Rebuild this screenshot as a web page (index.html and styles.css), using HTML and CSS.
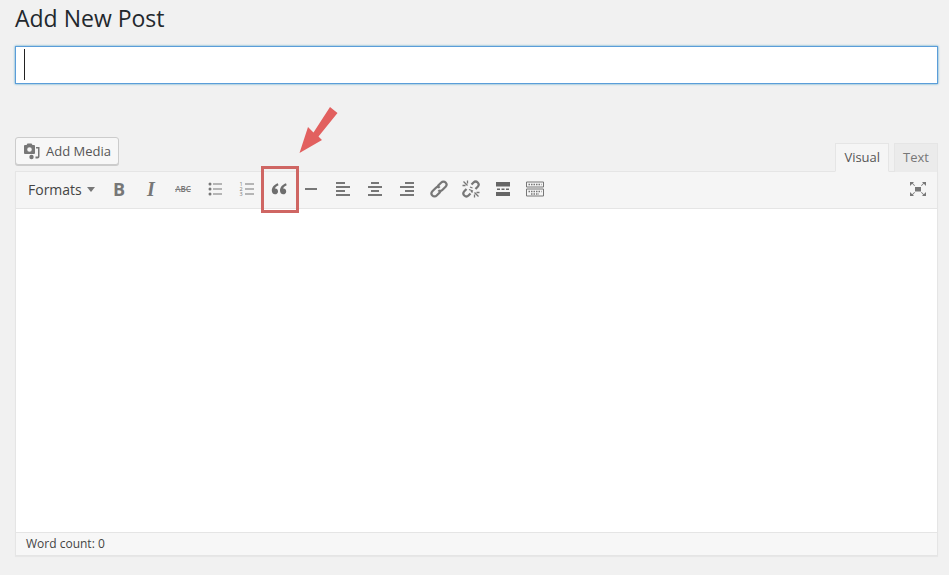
FILE: index.html
```html
<!DOCTYPE html>
<html lang="en">
<head>
<meta charset="utf-8">
<title>Add New Post</title>
<link rel="stylesheet" href="styles.css">
</head>
<body>
<main class="page">
  <h1 class="title">Add New Post</h1>
  <div class="title-input"><span class="caret"></span></div>
  <div class="editor-head">
    <button class="media-btn">
      <svg class="media-icon" width="18" height="18" viewBox="0 0 18 18" fill="#777"><path fill-rule="evenodd" d="M2 3h1.500L4.500 1.500h4L9.500 3H11a1 1 0 0 1 1 1v7a1 1 0 0 1-1 1H2a1 1 0 0 1-1-1V4a1 1 0 0 1 1-1zm4.500 2.200a2.300 2.300 0 1 0 0 4.600 2.300 2.300 0 0 0 0-4.600z"/><circle cx="8.500" cy="15" r="2.200"/><path d="M13 5h3.500v9.500a2 2 0 0 1-2 2H12.500v-2H15V6.500h-2z"/></svg>
      <span>Add Media</span>
    </button>
    <div class="tabs">
      <span class="tab tab-active">Visual</span>
      <span class="tab">Text</span>
    </div>
  </div>
  <section class="editor">
    <div class="toolbar">
      <span class="formats">Formats<i class="formats-arrow"></i></span>
      <span class="tool"><span class="glyph-b">B</span></span>
      <span class="tool"><span class="glyph-i">I</span></span>
      <span class="tool"><svg width="18" height="16" viewBox="0 0 18 16"><text x="9" y="11" class="abc" text-anchor="middle">ABC</text><line x1="1" y1="8.500" x2="17" y2="8.500" stroke="#777" stroke-width=".8"/></svg></span>
      <span class="tool"><svg width="16" height="16" viewBox="0 0 16 16" fill="#777"><circle cx="3" cy="3" r="1.500"/><circle cx="3" cy="8" r="1.500"/><circle cx="3" cy="13" r="1.500"/><path d="M6 2.500h9v1H6zM6 7.500h9v1H6zM6 12.500h9v1H6z"/></svg></span>
      <span class="tool"><svg width="16" height="16" viewBox="0 0 16 16" fill="#777"><text class="num"><tspan x="2" y="5">1</tspan><tspan x="2" y="10">2</tspan><tspan x="2" y="15">3</tspan></text><path d="M6 2.500h9v1H6zM6 7.500h9v1H6zM6 12.500h9v1H6z"/></svg></span>
      <span class="tool"><svg width="16" height="16" viewBox="0 0 16 16" fill="#6e6e6e"><path d="M6.800 2.200C3.400 3.400.8 6 .8 9.600c0 2.200 1.300 3.700 3.200 3.700 1.700 0 3-1.200 3-2.900S5.800 7.600 4.500 7.600c-.3 0-.5 0-.7.100.4-1.300 1.700-2.400 3.700-3.400zM15 2.200c-3.400 1.200-6 3.800-6 7.400 0 2.200 1.300 3.700 3.200 3.700 1.700 0 3-1.200 3-2.900s-1.200-2.800-2.500-2.800c-.3 0-.5 0-.7.100.4-1.300 1.700-2.400 3.700-3.400z"/></svg></span>
      <span class="tool"><svg width="16" height="16" viewBox="0 0 16 16" fill="#777"><path d="M2 7h12v2H2z"/></svg></span>
      <span class="tool"><svg width="16" height="16" viewBox="0 0 16 16" fill="#777"><path d="M1 1h9v2H1zM1 5h14v2H1zM1 9h9v2H1zM1 13h14v2H1z"/></svg></span>
      <span class="tool"><svg width="16" height="16" viewBox="0 0 16 16" fill="#777"><path d="M4 1h8v2H4zM1 5h14v2H1zM4 9h8v2H4zM1 13h14v2H1z"/></svg></span>
      <span class="tool"><svg width="16" height="16" viewBox="0 0 16 16" fill="#777"><path d="M6 1h9v2H6zM1 5h14v2H1zM6 9h9v2H6zM1 13h14v2H1z"/></svg></span>
      <span class="tool"><svg width="18" height="18" viewBox="0 0 18 18" fill="none" stroke="#777" stroke-width="2.200"><path d="M7.500 6.800l.8-1.300 3-3a3 3 0 0 1 4.300 0 3 3 0 0 1 0 4.200l-3.300 3.300c-1.300 1.300-3 1.200-4 .2"/><path d="M10.500 11.200l-.8 1.300-3 3a3 3 0 0 1-4.300 0 3 3 0 0 1 0-4.200l3.300-3.300c1.300-1.300 3-1.200 4-.2"/></svg></span>
      <span class="tool"><svg width="18" height="18" viewBox="0 0 18 18" fill="none" stroke="#777"><path stroke-width="2.200" d="M9.500 4.500l2-2a3 3 0 0 1 4.200 0 3 3 0 0 1 0 4.200l-2.200 2.300"/><path stroke-width="2.200" d="M8.500 13.500l-2 2a3 3 0 0 1-4.200 0 3 3 0 0 1 0-4.200l2.200-2.300"/><path stroke-width="1.300" d="M1.500 1.500l4 4M5.500.5v3M.5 5.500h3M16.500 16.500l-4-4M12.500 17.500v-3M17.500 12.500h-3M8 7l2.500 1M7 9.500l4 1.500M9 11l1.500 1.500"/></svg></span>
      <span class="tool"><svg width="16" height="16" viewBox="0 0 16 16" fill="#666"><path d="M1 1h14v4.500H1zM2 7.500h3V9H2zM6.500 7.500h3V9h-3zM11 7.500h3V9h-3zM1 11h14v4H1z"/></svg></span>
      <span class="tool"><svg width="18" height="16" viewBox="0 0 18 16" fill="none" stroke="#777"><path d="M.5 1h17v5H.5zM.5 8h17v7H.5z"/><path stroke-dasharray="1.500 1" stroke-width="1.500" d="M2.500 3.500h13M2.500 10.500h13M5 13h8"/></svg></span>
      <span class="tool tool-end"><svg width="16" height="16" viewBox="0 0 16 16" fill="#777"><path d="M5 6h6v4.500H5z"/><path d="M0 1h4L2.800 2.200 5 4.400 4.400 5 2.200 2.800 0 5zM16 1h-4l1.200 1.200L11 4.400l.6.600 2.200-2.200L16 5zM0 15h4l-1.200-1.200L5 11.600 4.400 11l-2.200 2.200L0 11zM16 15h-4l1.200-1.200L11 11.600l.6-.6 2.200 2.200L16 11z"/></svg></span>
    </div>
    <div class="content"></div>
    <div class="status">Word count: 0</div>
  </section>
</main>
<div class="callout"></div>
<svg class="arrow" width="42" height="52" viewBox="0 0 42 52"><path fill="#e2605f" d="M.5 48L9 22l5.500 5.500L31 2l7.500 6L19.500 31.500 23 35z"/></svg>
</body>
</html>
```
FILE: styles.css
```css
* { box-sizing: border-box; }
html, body { margin: 0; height: 100%; }
body {
  position: relative;
  background: #f1f1f1;
  color: #23282d;
  font-family: "Open Sans", sans-serif;
  font-size: 13px;
  overflow: hidden;
}
.page { padding: 0 11px 0 15px; }
.title {
  margin: 0;
  height: 46px;
  padding-top: 2px;
  font-size: 23px;
  line-height: 32px;
  font-weight: 400;
}
.title-input {
  height: 38px;
  padding: 2px 8px;
  background: #fff;
  border: 1px solid #5b9dd9;
  box-shadow: 0 0 2px rgba(30, 140, 190, .8);
}
.caret { display: block; width: 1px; height: 31px; background: #222; }
.editor-head {
  display: flex;
  justify-content: space-between;
  align-items: flex-end;
  margin-top: 53px;
  height: 34px;
}
.media-btn {
  display: flex;
  align-items: center;
  gap: 5px;
  align-self: flex-start;
  width: 104px;
  height: 28px;
  padding: 0 0 1px 7px;
  background: #f7f7f7;
  border: 1px solid #ccc;
  border-radius: 3px;
  box-shadow: 0 1px 0 #ccc;
  color: #555;
  font: 13px/26px "Open Sans", sans-serif;
}
.media-icon { flex: none; }
.tabs { display: flex; gap: 5px; position: relative; top: 1px; }
.tab {
  height: 29px;
  padding: 0 8px;
  line-height: 26px;
  color: #777;
  background: #ebebeb;
  border: 1px solid #e5e5e5;
  border-bottom: 0;
}
.tab-active {
  color: #555;
  background: #f5f5f5;
  border-bottom: 1px solid #f5f5f5;
}
.editor {
  display: flex;
  flex-direction: column;
  height: 385px;
  border: 1px solid #e5e5e5;
  background: #fff;
  box-shadow: 0 1px 1px rgba(0, 0, 0, .04);
}
.toolbar {
  display: flex;
  align-items: center;
  flex: none;
  height: 37px;
  padding: 0 4px 2px 12px;
  background: #f5f5f5;
  border-bottom: 1px solid #e5e5e5;
}
.formats { display: flex; align-items: center; width: 75px; color: #444; font-size: 14px; }
.formats-arrow {
  margin-left: 5px;
  border: 4.500px solid transparent;
  border-top: 5px solid #777;
  border-bottom: 0;
}
.tool {
  display: flex;
  flex: none;
  align-items: center;
  justify-content: center;
  width: 32px;
  height: 34px;
}
.tool-end { margin-left: auto; margin-right: -1px; }
.glyph-b { font: 700 18px "Open Sans", sans-serif; color: #777; }
.glyph-i { font: italic 700 20px "Liberation Serif", serif; color: #777; }
.abc { font: 600 8px "Open Sans", sans-serif; fill: #777; }
.num { font: 5.500px "Open Sans", sans-serif; fill: #777; text-anchor: middle; }
.content { flex: 1; background: #fff; }
.status {
  flex: none;
  height: 23px;
  padding-left: 10px;
  line-height: 22px;
  font-size: 12px;
  color: #444;
  background: #f7f7f7;
  border-top: 1px solid #e5e5e5;
}
.callout {
  position: absolute;
  left: 261px;
  top: 166px;
  width: 38px;
  height: 47px;
  border: 3px solid #cf6663;
}
.arrow { position: absolute; left: 299px; top: 105px; }
```
